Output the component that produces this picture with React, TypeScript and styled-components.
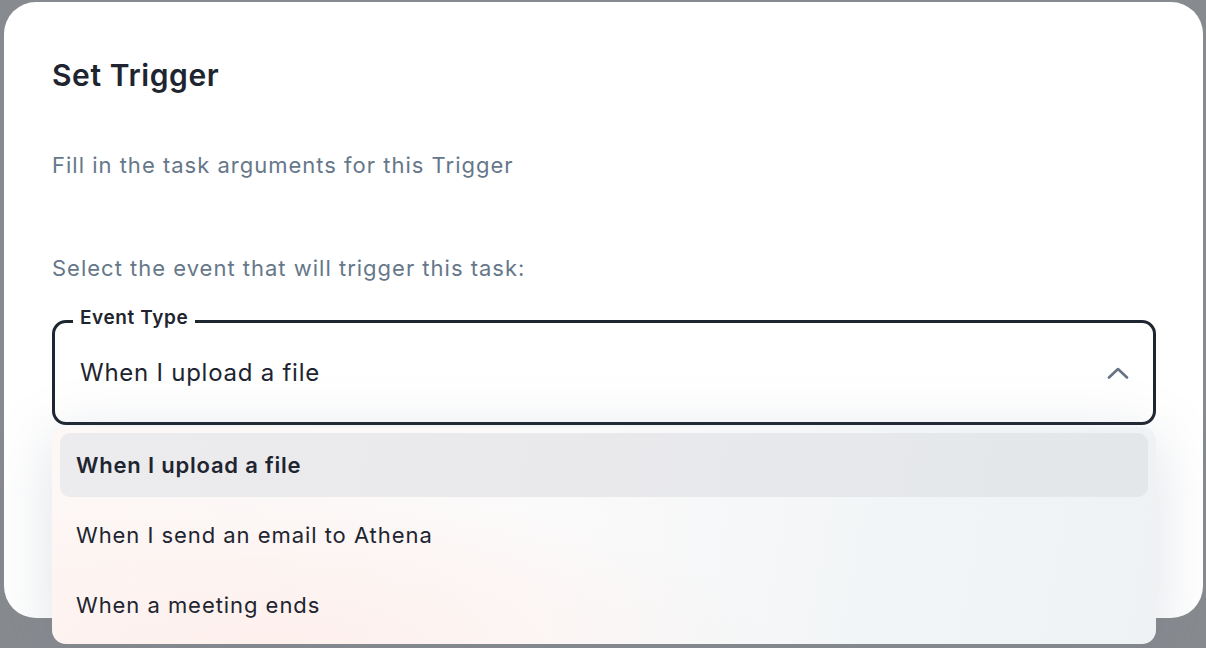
import styled, { createGlobalStyle } from 'styled-components';

const GlobalStyle = createGlobalStyle`
  html, body {
    margin: 0;
    padding: 0;
    height: 100%;
    overflow: hidden;
  }
  body {
    font-family: Inter, "Noto Sans", "Liberation Sans", sans-serif;
    color: #1e2530;
  }
`;

const options = [
  'When I upload a file',
  'When I send an email to Athena',
  'When a meeting ends',
];

const Backdrop = styled.div`
  width: 1206px;
  height: 648px;
  box-sizing: border-box;
  padding: 2px 3px 30px 4px;
  background: #878a8e;
  display: flex;
`;

const Modal = styled.div`
  flex: 1;
  background: #ffffff;
  border-radius: 32px;
  padding: 55px 47px 0 48px;
  display: flex;
  flex-direction: column;
`;

const Title = styled.h2`
  margin: 0;
  font-size: 30px;
  font-weight: 600;
  line-height: 36px;
  color: #1e2530;
  letter-spacing: 0.6px;
`;

const Hint = styled.p<{ $top: number }>`
  margin: ${(p) => p.$top}px 0 0;
  font-size: 22px;
  line-height: 28px;
  letter-spacing: 1px;
  color: #66778a;
  font-weight: 400;
`;

const Field = styled.div`
  position: relative;
  margin-top: 38px;
  height: 105px;
  box-sizing: border-box;
  border: 3px solid #1e2630;
  border-radius: 14px;
  display: flex;
  align-items: center;
  padding: 0 24px 0 25px;
`;

const Legend = styled.span`
  position: absolute;
  top: -17px;
  left: 18px;
  padding: 0 7px;
  background: #ffffff;
  font-size: 19px;
  line-height: 24px;
  font-weight: 600;
  letter-spacing: 0.6px;
  color: #1e2530;
`;

const Value = styled.span`
  flex: 1;
  font-size: 24px;
  line-height: 30px;
  letter-spacing: 0.75px;
  color: #1e2530;
`;

const Chevron = styled.svg`
  width: 22px;
  height: 12px;
  color: #657384;
`;

const Menu = styled.ul`
  position: absolute;
  top: 104px;
  left: -3px;
  right: -3px;
  margin: 0;
  padding: 6px 8px 7px;
  list-style: none;
  border-radius: 14px;
  background:
    radial-gradient(ellipse 45% 70% at 20% 100%, rgba(255, 236, 232, 0.7), transparent),
    linear-gradient(100deg, #fdf7f5 0%, #fbfafa 45%, #f2f5f7 75%, #eef2f4 100%);
  box-shadow: 0 10px 60px rgba(110, 125, 145, 0.22);
  display: flex;
  flex-direction: column;
  gap: 6px;
`;

const Item = styled.li<{ $active?: boolean }>`
  height: 64px;
  display: flex;
  align-items: center;
  padding: 0 16px;
  border-radius: 10px;
  font-size: 22px;
  letter-spacing: ${(p) => (p.$active ? 0.8 : 0.95)}px;
  font-weight: ${(p) => (p.$active ? 600 : 400)};
  color: #1e2530;
  background: ${(p) => (p.$active ? 'linear-gradient(100deg, #ecebed 0%, #e9e9ec 50%, #e3e7ea 100%)' : 'transparent')};
`;

function App(): JSX.Element {
  const selected = options[0];
  return (
    <>
      <GlobalStyle />
      <Backdrop>
        <Modal>
          <Title>Set Trigger</Title>
          <Hint $top={58}>Fill in the task arguments for this Trigger</Hint>
          <Hint $top={75}>Select the event that will trigger this task:</Hint>
          <Field>
            <Legend>Event Type</Legend>
            <Value>{selected}</Value>
            <Chevron viewBox="0 0 22 12" fill="none" stroke="currentColor" strokeWidth="2.6" strokeLinecap="round" strokeLinejoin="round">
              <path d="M2 10.5L11 2l9 8.5" />
            </Chevron>
            <Menu>
              {options.map((opt) => (
                <Item key={opt} $active={opt === selected}>{opt}</Item>
              ))}
            </Menu>
          </Field>
        </Modal>
      </Backdrop>
    </>
  );
}

export default App;
